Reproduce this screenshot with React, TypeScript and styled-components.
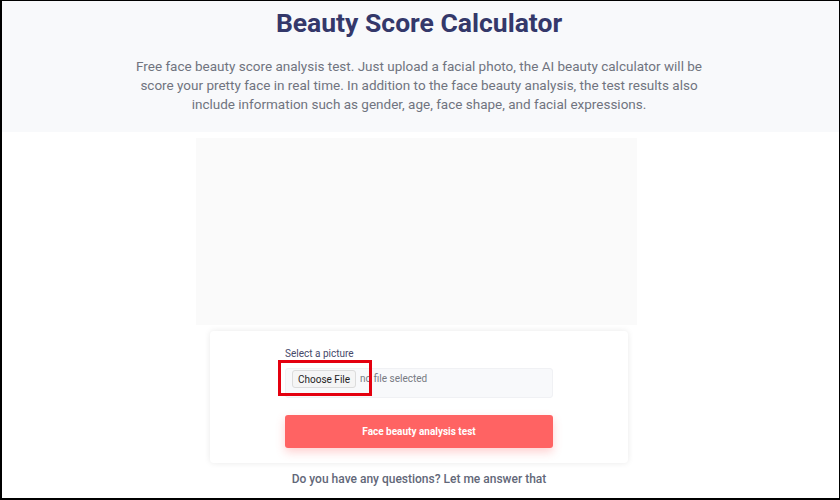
import styled, { createGlobalStyle } from "styled-components";

const GlobalStyle = createGlobalStyle`
  html, body {
    margin: 0;
    padding: 0;
    background: #ffffff;
  }
  * {
    box-sizing: border-box;
  }
`;

const Frame = styled.div`
  position: relative;
  width: 840px;
  height: 500px;
  overflow: hidden;
  border-style: solid;
  border-color: #000;
  border-width: 1px 1px 2px 2px;
  font-family: Roboto, "Liberation Sans", sans-serif;
  display: flex;
  flex-direction: column;
  align-items: center;
`;

const Hero = styled.header`
  align-self: stretch;
  height: 131px;
  background: #f8f9fb;
  display: flex;
  flex-direction: column;
  align-items: center;
  padding-top: 5px;
`;

const Title = styled.h1`
  margin: 0 3px 0 0;
  font-size: 26.5px;
  line-height: 33px;
  font-weight: 700;
  color: #34386a;
`;

const Lead = styled.p`
  margin: 18px 3px 0 0;
  width: 590px;
  text-align: center;
  font-size: 13.5px;
  line-height: 19px;
  color: #70747f;
`;

const Preview = styled.div`
  width: 441px;
  height: 187px;
  margin-top: 6px;
  margin-right: 8px;
  background: #fafafa;
`;

const Card = styled.section`
  position: relative;
  width: 418px;
  height: 132px;
  margin-top: 6px;
  margin-right: 3px;
  background: #fff;
  border-radius: 4px;
  box-shadow: 0 0 6px rgba(0, 0, 0, 0.09);
  padding: 17px 75px 0;
  display: flex;
  flex-direction: column;
`;

const Label = styled.div`
  font-size: 10px;
  line-height: 12px;
  color: #46496a;
  margin-bottom: 8px;
`;

const FileField = styled.div`
  height: 30px;
  background: #f8f9fb;
  border: 1px solid #f0f1f4;
  border-radius: 3px;
  display: flex;
  align-items: flex-start;
  padding: 1px 0 0 6px;
  gap: 4px;
`;

const FileButton = styled.span`
  height: 18px;
  padding: 0 5px;
  display: flex;
  align-items: center;
  background: #f5f5f5;
  border: 1px solid #dcdcdc;
  border-radius: 3px;
  font-size: 10px;
  color: #1e1e1e;
`;

const FileHint = styled.span`
  font-size: 10px;
  line-height: 18px;
  color: #777a82;
`;

const SubmitButton = styled.button`
  margin-top: 17px;
  height: 33px;
  border: none;
  border-radius: 3px;
  background: #ff6363;
  color: #fff;
  font-family: inherit;
  font-size: 10px;
  font-weight: 700;
  box-shadow: 0 4px 10px rgba(255, 99, 99, 0.3);
`;

const Highlight = styled.div`
  position: absolute;
  left: 68px;
  top: 29px;
  width: 94px;
  height: 36px;
  border: 3px solid #e4000f;
`;

const Question = styled.div`
  margin: 9px 3px 0 0;
  font-size: 12px;
  font-weight: 500;
  color: #626778;
`;

export default function App() {
  return (
    <>
      <GlobalStyle />
      <Frame>
        <Hero>
          <Title>Beauty Score Calculator</Title>
          <Lead>
            Free face beauty score analysis test. Just upload a facial photo, the AI beauty
            calculator will be score your pretty face in real time. In addition to the face
            beauty analysis, the test results also include information such as gender, age,
            face shape, and facial expressions.
          </Lead>
        </Hero>
        <Preview />
        <Card>
          <Label>Select a picture</Label>
          <FileField>
            <FileButton>Choose File</FileButton>
            <FileHint>no file selected</FileHint>
          </FileField>
          <SubmitButton type="button">Face beauty analysis test</SubmitButton>
          <Highlight />
        </Card>
        <Question>Do you have any questions? Let me answer that</Question>
      </Frame>
    </>
  );
}
